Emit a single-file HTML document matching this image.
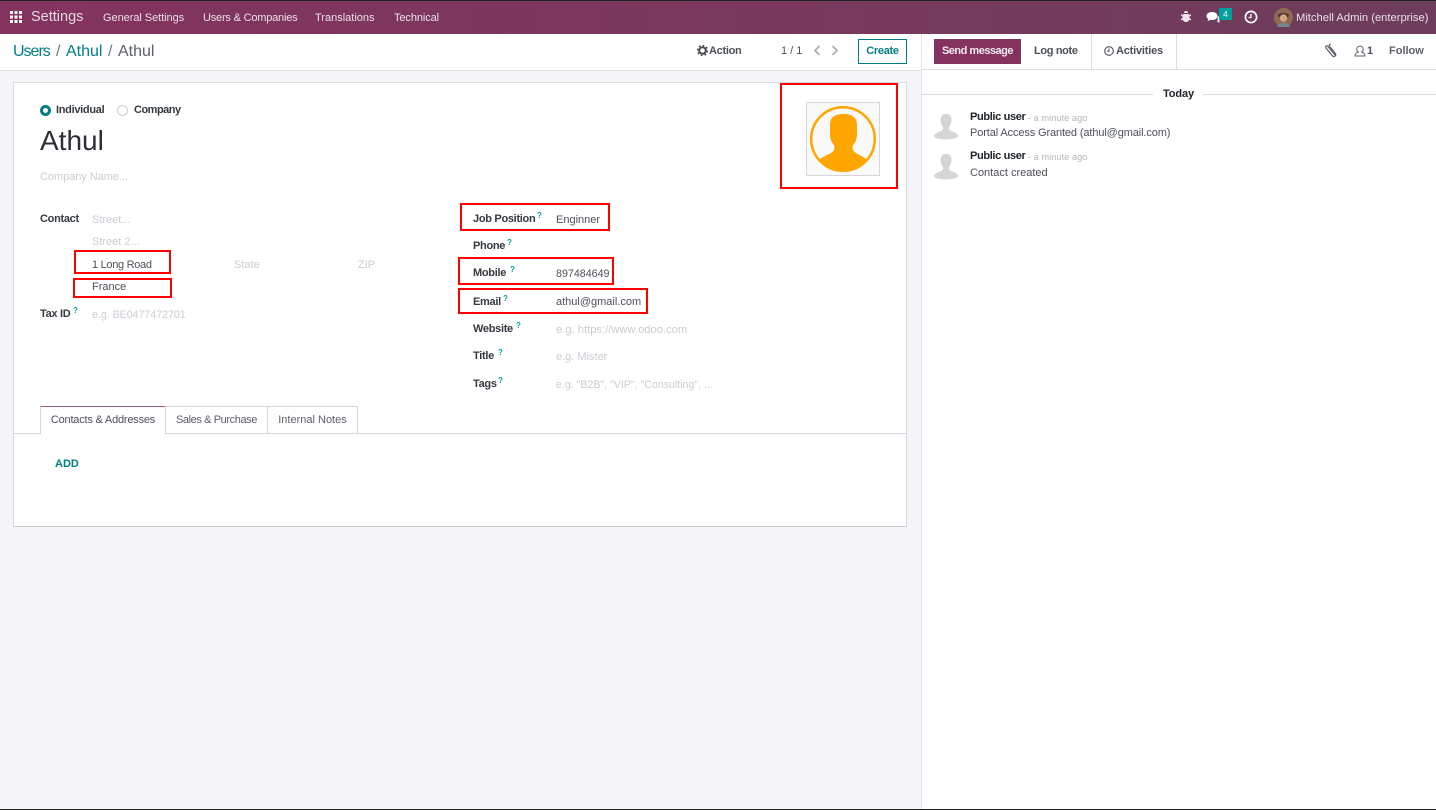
<!DOCTYPE html>
<html><head><meta charset="utf-8"><style>
html,body{margin:0;padding:0}
body{width:1436px;height:810px;position:relative;overflow:hidden;background:#f4f4f9;font-family:"Liberation Sans",sans-serif;font-size:11px;color:#4c4c4c}
.a{position:absolute;white-space:nowrap;line-height:14px;margin-top:1px}
.b{font-weight:bold;color:#343a40;letter-spacing:-.3px}
.p{color:#c9ccd2}
.v{color:#4c5058}
.n{color:#eadfe6;font-size:11px;margin-top:0}
.c{margin-top:0;font-size:16px;line-height:18px}
sup{position:absolute;font-size:8px;font-weight:bold;color:#00a09d;top:-1px;line-height:10px;letter-spacing:0}
.r{position:absolute;border:2px solid #f00;box-sizing:border-box}
.box{position:absolute;box-sizing:border-box}
</style></head><body>
<div class="box" style="left:0;top:0;width:1436px;height:34px;background:linear-gradient(90deg,#84335f,#6e3d5b);border-top:1px solid #222"></div>
<svg class="box" style="left:10px;top:11px" width="12" height="12"><g fill="#fff"><rect width="3" height="3"/><rect x="4.5" width="3" height="3"/><rect x="9" width="3" height="3"/><rect y="4.5" width="3" height="3"/><rect x="4.5" y="4.5" width="3" height="3"/><rect x="9" y="4.5" width="3" height="3"/><rect y="9" width="3" height="3"/><rect x="4.5" y="9" width="3" height="3"/><rect x="9" y="9" width="3" height="3"/></g></svg>
<div class="a" style="left:31px;top:9px;color:#e6d8e1;font-size:14.5px">Settings</div>
<div class="a n" style="left:103px;top:11px;letter-spacing:-.05px">General Settings</div>
<div class="a n" style="left:203px;top:11px;letter-spacing:-.2px">Users &amp; Companies</div>
<div class="a n" style="left:315px;top:11px">Translations</div>
<div class="a n" style="left:394px;top:11px;letter-spacing:-.1px">Technical</div>
<svg class="box" style="left:1180px;top:10px" width="12" height="13"><path d="M6 1a2 2 0 0 1 2 2H4a2 2 0 0 1 2-2zM3.500 4h5l1 1 1.500-1v1.500L9.500 6.500V8L11 9v1.500L9.300 9.500C9 11 7.500 12 6 12S3 11 2.700 9.500L1 10.500V9l1.500-1V6.500L1 5.500V4l1.500 1z" fill="#efe6eb"/></svg>
<svg class="box" style="left:1206px;top:10px" width="15" height="14"><path d="M6 2c3 0 5.500 1.500 5.500 4S9 10 6 10c-.6 0-1.200 0-1.700-.2L1.500 11.300 2.300 9C1.100 8.300.5 7.300.5 6 .5 3.500 3 2 6 2z" fill="#fff"/><path d="M12 6c1.500.6 2.400 1.600 2.400 2.900 0 1-.5 1.800-1.300 2.300l.6 1.800-2.300-1.200" fill="#fff"/></svg>
<div class="box" style="left:1219px;top:8px;width:13px;height:12px;background:#00a09d;color:#fff;font-size:8.500px;text-align:center;line-height:12px">4</div>
<svg class="box" style="left:1244px;top:10px" width="14" height="14"><circle cx="7" cy="7" r="5.600" fill="none" stroke="#fff" stroke-width="1.700"/><path d="M7 3.800V7.500H4.500" fill="none" stroke="#fff" stroke-width="1.300"/></svg>
<svg class="box" style="left:1274px;top:8px" width="19" height="19"><circle cx="9.500" cy="9.500" r="9.500" fill="#8d6a52"/><path d="M4 8c0-4 11-4 11 0l-1 1H5z" fill="#4a3328"/><circle cx="9.500" cy="10" r="3.700" fill="#d3a485"/><path d="M3 18c2-4 11-4 13 0a9.500 9.500 0 0 1-13 0z" fill="#6f8b8e"/></svg>
<div class="a n" style="left:1296px;top:11px;font-size:11.200px">Mitchell Admin (enterprise)</div>

<div class="box" style="left:0;top:34px;width:921px;height:37px;background:#fff;border-bottom:1px solid #dee0e5"></div>
<div class="a c" style="left:13px;top:43px;color:#017e84;letter-spacing:-1px">Users</div>
<div class="a c" style="left:56px;top:43px;color:#6c757d">/</div>
<div class="a c" style="left:66px;top:43px;color:#017e84">Athul</div>
<div class="a c" style="left:108px;top:43px;color:#6c757d">/</div>
<div class="a c" style="left:118px;top:43px;color:#5c6068">Athul</div>
<svg class="box" style="left:697px;top:45px" width="11" height="11"><circle cx="5.500" cy="5.500" r="3.300" fill="none" stroke="#4c4c4c" stroke-width="2"/><circle cx="5.500" cy="5.500" r="5" fill="none" stroke="#4c4c4c" stroke-width="1.500" stroke-dasharray="1.800 2.100"/></svg>
<div class="a b" style="left:709px;top:43px;color:#4c5058">Action</div>
<div class="a" style="left:781px;top:43px;color:#4c5058">1 / 1</div>
<svg class="box" style="left:812px;top:44px" width="10" height="13"><path d="M7.500 2L3 6.500l4.500 4.500" fill="none" stroke="#a9adb3" stroke-width="1.700"/></svg>
<svg class="box" style="left:830px;top:44px" width="10" height="13"><path d="M2.500 2L7 6.500 2.500 11" fill="none" stroke="#a9adb3" stroke-width="1.700"/></svg>
<div class="box" style="left:858px;top:39px;width:49px;height:25px;border:1px solid #017e84;color:#017e84;font-weight:bold;text-align:center;line-height:23px;letter-spacing:-.3px">Create</div>

<div class="box" style="left:13px;top:82px;width:894px;height:445px;background:#fff;border:1px solid #d8dadd;border-bottom:1px solid #c9ccd2"></div>
<div class="box" style="left:40px;top:105px;width:11px;height:11px;border-radius:50%;border:3px solid #017e84;background:#fff"></div>
<div class="a b" style="left:56px;top:102px">Individual</div>
<div class="box" style="left:117px;top:105px;width:11px;height:11px;border-radius:50%;border:1px solid #c9ccd2;background:#fff"></div>
<div class="a b" style="left:134px;top:102px;letter-spacing:-.5px">Company</div>
<div class="a" style="left:40px;top:124px;font-size:28px;line-height:32px;color:#2b2f35">Athul</div>
<div class="a p" style="left:40px;top:169px;letter-spacing:-.05px">Company Name...</div>
<div class="a b" style="left:40px;top:211px">Contact</div>
<div class="a p" style="left:92px;top:212px">Street...</div>
<div class="a p" style="left:92px;top:234px">Street 2...</div>
<div class="a v" style="left:92px;top:257px;letter-spacing:-.3px">1 Long Road</div>
<div class="a p" style="left:234px;top:257px">State</div>
<div class="a p" style="left:358px;top:257px">ZIP</div>
<div class="a v" style="left:92px;top:279px">France</div>
<div class="a b" style="left:40px;top:306px">Tax ID<sup style="left:33px">?</sup></div>
<div class="a p" style="left:92px;top:307px;font-size:10.600px">e.g. BE0477472701</div>

<div class="a b" style="left:473px;top:211px">Job Position<sup style="left:64px">?</sup></div>
<div class="a v" style="left:556px;top:212px">Enginner</div>
<div class="a b" style="left:473px;top:238px">Phone<sup style="left:34px">?</sup></div>
<div class="a b" style="left:473px;top:265px">Mobile<sup style="left:37px">?</sup></div>
<div class="a v" style="left:556px;top:266px;font-size:10.700px">897484649</div>
<div class="a b" style="left:473px;top:294px">Email<sup style="left:30px">?</sup></div>
<div class="a v" style="left:556px;top:294px">athul@gmail.com</div>
<div class="a b" style="left:473px;top:321px">Website<sup style="left:43px">?</sup></div>
<div class="a p" style="left:556px;top:322px;font-size:11.200px">e.g. https://www.odoo.com</div>
<div class="a b" style="left:473px;top:348px">Title<sup style="left:25px">?</sup></div>
<div class="a p" style="left:556px;top:349px">e.g. Mister</div>
<div class="a b" style="left:473px;top:376px">Tags<sup style="left:25px">?</sup></div>
<div class="a p" style="left:556px;top:377px;font-size:10.600px">e.g. "B2B", "VIP", "Consulting", ...</div>

<div class="box" style="left:14px;top:433px;width:892px;height:1px;background:#d4d6de"></div>
<div class="box" style="left:40px;top:406px;width:126px;height:28px;background:#fff;border:1px solid #d4d6de;border-top:1px solid #9e5a84;border-bottom:0;text-align:center;line-height:26px;color:#4c5058;letter-spacing:-.2px">Contacts &amp; Addresses</div>
<div class="box" style="left:165px;top:406px;width:103px;height:27px;background:#fff;border:1px solid #d4d6de;border-bottom:0;text-align:center;line-height:26px;color:#5c6068;letter-spacing:-.4px">Sales &amp; Purchase</div>
<div class="box" style="left:267px;top:406px;width:91px;height:27px;background:#fff;border:1px solid #d4d6de;border-bottom:0;text-align:center;line-height:26px;color:#5c6068">Internal Notes</div>
<div class="a" style="left:55px;top:456px;font-weight:bold;color:#017e84">ADD</div>

<div class="box" style="left:806px;top:102px;width:74px;height:74px;background:#f9f9f9;border:1px solid #d4d6de"></div>
<svg class="box" style="left:807px;top:103px" width="72" height="72"><defs><clipPath id="c"><circle cx="36" cy="36" r="32"/></clipPath></defs><circle cx="36" cy="36" r="31.800" fill="none" stroke="#ffa500" stroke-width="2.500"/><path clip-path="url(#c)" d="M36.500 11C44.500 11 50 14 50 22C50 27 50 30 50 32C50 36 48 40 46 42C45 46 46 48 49 50C52 52 57 54 60 57L60 72L12 72L12 57C15 54 21 52 24 50C27 48 28 46 27 42C25 40 23 36 23 32C23 28 23 26 23 22C23 14 28 11 36.500 11Z" fill="#ffa500"/></svg>

<div class="box" style="left:921px;top:34px;width:515px;height:775px;background:#fff;border-left:1px solid #e3e4e8"></div>
<div class="box" style="left:922px;top:69px;width:514px;height:1px;background:#dcdde0"></div>
<div class="box" style="left:934px;top:39px;width:87px;height:25px;background:#84335f;color:#f3e9ef;font-weight:bold;text-align:center;line-height:25px;letter-spacing:-.5px">Send message</div>
<div class="a b" style="left:1034px;top:43px;color:#4c5058;letter-spacing:-.35px">Log note</div>
<div class="box" style="left:1091px;top:34px;width:86px;height:36px;background:#fff;border-left:1px solid #dcdde0;border-right:1px solid #dcdde0;border-bottom:1px solid #dcdde0"></div>
<svg class="box" style="left:1104px;top:46px" width="10" height="10"><circle cx="5" cy="5" r="4.300" fill="none" stroke="#4c5058" stroke-width="1.100"/><path d="M5 2.500V5.300H3" fill="none" stroke="#4c5058"/></svg>
<div class="a b" style="left:1116px;top:43px;color:#4c5058;letter-spacing:-.2px">Activities</div>
<svg class="box" style="left:1324px;top:43px" width="14" height="15"><path d="M11.500 12.500L4 3.500C3 2 1 3.300 2 5l6.500 8c1.500 1.500 4-.3 3-2.300L5.500 3.300C4.700 2.200 5.500 1 6.800 1.500" fill="none" stroke="#5c6068" stroke-width="1.200"/></svg>
<svg class="box" style="left:1354px;top:45px" width="12" height="12"><path d="M1 11c0-3 2-3.500 3.300-4C3 6 2.700 4.500 2.800 3.500 3 2 4.500 1 6 1s3 1 3.200 2.500C9.300 4.500 9 6 7.700 7c1.300.5 3.300 1 3.300 4z" fill="none" stroke="#5c6068" stroke-width="1"/></svg>
<div class="a b" style="left:1367px;top:43px;color:#4c5058">1</div>
<div class="a b" style="left:1389px;top:43px;color:#5c6068;letter-spacing:0">Follow</div>

<div class="box" style="left:922px;top:94px;width:231px;height:1px;background:#dcdde0"></div>
<div class="box" style="left:1203px;top:94px;width:233px;height:1px;background:#dcdde0"></div>
<div class="a" style="left:1163px;top:86px;font-weight:bold;color:#212529;letter-spacing:-.1px">Today</div>

<svg class="box" style="left:933px;top:113px" width="26" height="27"><path d="M13 1c4 0 5.500 2.500 5.500 6 0 3-1 5-2.500 7-.5 2 0 3 2 4 3 1 7 2.500 7 5.500 0 1-5 3-12 3S1 24.500 1 23.500c0-3 4-4.500 7-5.500 2-1 2.500-2 2-4-1.500-2-2.500-4-2.500-7 0-3.500 1.500-6 5.500-6z" fill="#d5d5d5"/></svg>
<div class="a b" style="left:970px;top:109px;color:#212529;letter-spacing:-.35px">Public user</div>
<div class="a" style="left:1028px;top:110px;color:#b4b6ba;font-size:9.300px">- a minute ago</div>
<div class="a v" style="left:970px;top:125px;letter-spacing:-.12px">Portal Access Granted (athul@gmail.com)</div>
<svg class="box" style="left:933px;top:153px" width="26" height="27"><path d="M13 1c4 0 5.500 2.500 5.500 6 0 3-1 5-2.500 7-.5 2 0 3 2 4 3 1 7 2.500 7 5.500 0 1-5 3-12 3S1 24.500 1 23.500c0-3 4-4.500 7-5.500 2-1 2.500-2 2-4-1.500-2-2.500-4-2.500-7 0-3.500 1.500-6 5.500-6z" fill="#d5d5d5"/></svg>
<div class="a b" style="left:970px;top:148px;color:#212529;letter-spacing:-.35px">Public user</div>
<div class="a" style="left:1028px;top:149px;color:#b4b6ba;font-size:9.300px">- a minute ago</div>
<div class="a v" style="left:970px;top:165px">Contact created</div>

<div class="r" style="left:780px;top:83px;width:118px;height:106px"></div>
<div class="r" style="left:74px;top:250px;width:97px;height:24px"></div>
<div class="r" style="left:73px;top:278px;width:99px;height:20px"></div>
<div class="r" style="left:460px;top:203px;width:150px;height:28px"></div>
<div class="r" style="left:458px;top:257px;width:156px;height:28px"></div>
<div class="r" style="left:458px;top:288px;width:190px;height:26px"></div>
<div class="box" style="left:0;top:809px;width:1436px;height:1px;background:#222"></div>
</body></html>
